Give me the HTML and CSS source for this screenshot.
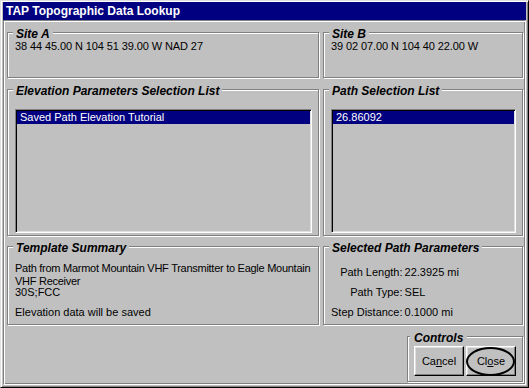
FILE: index.html
```html
<!DOCTYPE html>
<html lang="en">
<head>
  <meta charset="UTF-8">
  <title>TAP Topographic Data Lookup</title>
  <link rel="stylesheet" href="styles.css">
</head>
<body>
  <div class="window">
    <div class="titlebar">TAP Topographic Data Lookup</div>

    <div class="client">
      <div class="row">
        <div class="group group-left site">
          <div class="group-title">Site A</div>
          <div class="site-text">38 44 45.00 N 104 51 39.00 W NAD 27</div>
        </div>
        <div class="group group-right site">
          <div class="group-title">Site B</div>
          <div class="site-text">39 02 07.00 N 104 40 22.00 W</div>
        </div>
      </div>

      <div class="row row-lists">
        <div class="group group-left list-group">
          <div class="group-title">Elevation Parameters Selection List</div>
          <div class="listbox">
            <div class="item selected">Saved Path Elevation Tutorial</div>
          </div>
        </div>
        <div class="group group-right list-group">
          <div class="group-title">Path Selection List</div>
          <div class="listbox">
            <div class="item selected">26.86092</div>
          </div>
        </div>
      </div>

      <div class="row row-info">
        <div class="group group-left info">
          <div class="group-title">Template Summary</div>
          <div class="summary-desc">Path from Marmot Mountain VHF Transmitter to Eagle Mountain<br>VHF Receiver</div>
          <div class="summary-code">30S;FCC</div>
          <div class="summary-note">Elevation data will be saved</div>
        </div>
        <div class="group group-right info">
          <div class="group-title">Selected Path Parameters</div>
          <div class="params">
            <span class="param-label">Path Length:</span><span>22.3925 mi</span>
            <span class="param-label">Path Type:</span><span>SEL</span>
            <span class="param-label">Step Distance:</span><span>0.1000 mi</span>
          </div>
        </div>
      </div>

      <div class="row row-controls">
        <div class="group controls">
          <div class="group-title">Controls</div>
          <div class="buttons">
            <button class="btn">Ca<u>n</u>cel</button>
            <button class="btn btn-default">Cl<u>o</u>se<span class="focus-ring"></span></button>
          </div>
        </div>
      </div>
    </div>
  </div>
</body>
</html>
```

FILE: styles.css
```css
* {
  box-sizing: border-box;
}
body {
  margin: 0;
  background: #c0c0c0;
  font-family: 'Liberation Sans', Arial, sans-serif;
  font-size: 11px;
  color: #000;
}
.window {
  width: 529px;
  height: 388px;
  background: #c0c0c0;
  border: 1px solid;
  border-color: #dfdfdf #000 #000 #dfdfdf;
  box-shadow: inset 1px 1px #fff, inset -1px -1px #808080;
  padding: 1px 2px 2px 2px;
}
.titlebar {
  height: 18px;
  background: #000080;
  color: #fff;
  font-weight: bold;
  font-size: 12px;
  line-height: 17px;
  padding: 1px 0 0 3px;
  white-space: nowrap;
}
.client {
  height: 365px;
  border: 1px solid;
  border-color: #808080 #fff #fff #808080;
  box-shadow: inset 1px 1px #fff, inset -1px -1px #808080;
  padding: 11px 0 0 3px;
}
.row {
  display: flex;
  gap: 4px;
}
.row-lists {
  margin-top: 11px;
}
.row-info {
  margin-top: 10px;
}
.row-controls {
  margin-top: 11px;
  justify-content: flex-end;
  width: 516px;
}

/* etched group box */
.group {
  border: 1px solid #808080;
  box-shadow: inset 1px 1px #fff, 1px 1px #fff;
  padding: 0 6px 0 7px;
}
.group-left {
  width: 312px;
}
.group-right {
  width: 200px;
}
.group-title {
  width: max-content;
  margin: -6px 0 0 -2px;
  padding: 0 3px;
  background: #c0c0c0;
  font-size: 12px;
  line-height: 14px;
  font-weight: bold;
  font-style: italic;
  white-space: nowrap;
}
.site {
  height: 46px;
}
.site-text {
  margin-top: -1px;
  line-height: 13px;
  white-space: nowrap;
  letter-spacing: -0.1px;
}
.list-group {
  height: 147px;
}
.info {
  height: 79px;
}

.listbox {
  margin-top: 11px;
  height: 124px;
  border: 1px solid;
  border-color: #808080 #fff #fff #808080;
  box-shadow: inset 1px 1px #000, inset -1px -1px #dfdfdf;
  padding: 1px;
  background: #c0c0c0;
}
.item {
  height: 13px;
  line-height: 13px;
  padding-left: 3px;
  white-space: nowrap;
}
.item.selected {
  background: #000080;
  color: #fff;
}

.summary-desc {
  margin-top: 7px;
  line-height: 13px;
  white-space: nowrap;
  letter-spacing: -0.27px;
}
.summary-code {
  margin-top: -2px;
  line-height: 13px;
}
.summary-note {
  margin-top: 7px;
  line-height: 13px;
}
.params {
  margin-top: 7px;
  display: grid;
  grid-template-columns: auto 1fr;
  column-gap: 2px;
  line-height: 20px;
  white-space: nowrap;
}
.param-label {
  text-align: right;
}

.controls {
  width: 116px;
  height: 46px;
  padding-left: 6px;
}
.controls .group-title {
  margin-left: -4px;
  padding: 0 4px;
}
.buttons {
  display: flex;
  gap: 2px;
  margin-top: 1px;
}
.btn {
  position: relative;
  width: 50px;
  height: 30px;
  padding: 0 0 1px 0;
  font-family: 'Liberation Sans', Arial, sans-serif;
  font-size: 11px;
  color: #000;
  background: #c0c0c0;
  border: 1px solid;
  border-color: #fff #000 #000 #fff;
  box-shadow: inset -1px -1px #808080, inset 1px 1px #dfdfdf;
}
.focus-ring {
  position: absolute;
  left: -1px;
  top: 0;
  width: 49px;
  height: 29px;
  border: 2px solid #000;
  border-radius: 50%;
}
```
